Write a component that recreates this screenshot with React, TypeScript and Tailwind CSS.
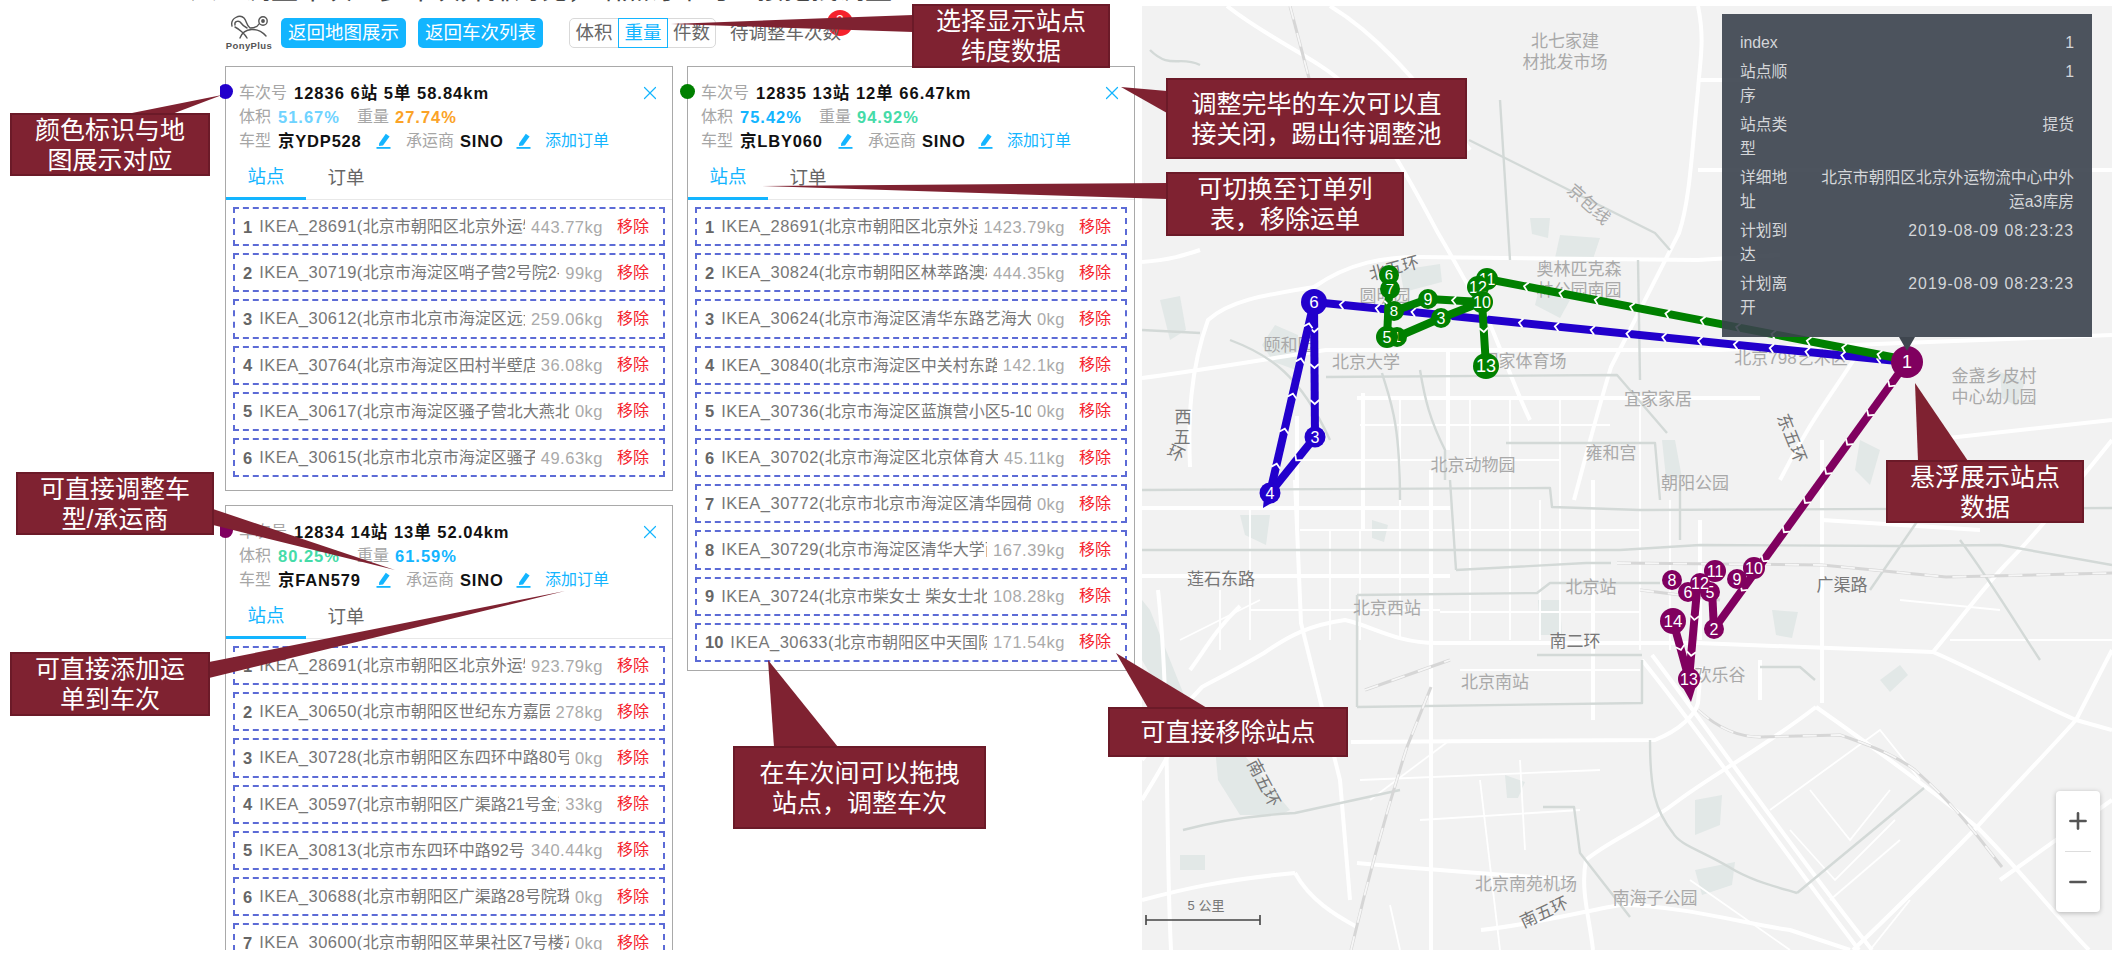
import React from 'react';
import { Minus, Plus, X } from 'lucide-react';

type Stop = { address: string; weight: string };

type Trip = {
  color: string;
  no: string;
  volume: string;
  volumeColor: string;
  weight: string;
  weightColor: string;
  plate: string;
  stops: Stop[];
  height: string;
};

const trips: Record<string, Trip> = {
  a: {
    color: 'bg-[#2200cc]',
    no: '12836 6站 5单 58.84km',
    volume: '51.67%',
    volumeColor: 'text-[#6fd3ff]',
    weight: '27.74%',
    weightColor: 'text-[#fba327]',
    plate: '京YDP528',
    height: 'h-[425px]',
    stops: [
      { address: 'IKEA_28691(北京市朝阳区北京外运物流中心中外运a3库房)', weight: '443.77kg' },
      { address: 'IKEA_30719(北京市海淀区哨子营2号院2-1单元)', weight: '99kg' },
      { address: 'IKEA_30612(北京市北京市海淀区远大路1号)', weight: '259.06kg' },
      { address: 'IKEA_30764(北京市海淀区田村半壁店6号楼)', weight: '36.08kg' },
      { address: 'IKEA_30617(北京市海淀区骚子营北大燕北园小区)', weight: '0kg' },
      { address: 'IKEA_30615(北京市北京市海淀区骚子营北大)', weight: '49.63kg' },
    ],
  },
  b: {
    color: 'bg-[#008000]',
    no: '12835 13站 12单 66.47km',
    volume: '75.42%',
    volumeColor: 'text-[#13b5ff]',
    weight: '94.92%',
    weightColor: 'text-[#45dba8]',
    plate: '京LBY060',
    height: '',
    stops: [
      { address: 'IKEA_28691(北京市朝阳区北京外运物流中心中外运a3库房)', weight: '1423.79kg' },
      { address: 'IKEA_30824(北京市朝阳区林萃路澳林春天小区)', weight: '444.35kg' },
      { address: 'IKEA_30624(北京市海淀区清华东路艺海大厦小区)', weight: '0kg' },
      { address: 'IKEA_30840(北京市海淀区中关村东路-1号院)', weight: '142.1kg' },
      { address: 'IKEA_30736(北京市海淀区蓝旗营小区5-10楼)', weight: '0kg' },
      { address: 'IKEA_30702(北京市海淀区北京体育大学校内)', weight: '45.11kg' },
      { address: 'IKEA_30772(北京市北京市海淀区清华园荷清苑小区)', weight: '0kg' },
      { address: 'IKEA_30729(北京市海淀区清华大学西门内)', weight: '167.39kg' },
      { address: 'IKEA_30724(北京市柴女士 柴女士北京市海淀区)', weight: '108.28kg' },
      { address: 'IKEA_30633(北京市朝阳区中天国际公寓小区)', weight: '171.54kg' },
    ],
  },
  c: {
    color: 'bg-[#80005f]',
    no: '12834 14站 13单 52.04km',
    volume: '80.25%',
    volumeColor: 'text-[#45dba8]',
    weight: '61.59%',
    weightColor: 'text-[#13b5ff]',
    plate: '京FAN579',
    height: 'h-[470px]',
    stops: [
      { address: 'IKEA_28691(北京市朝阳区北京外运物流中心中外运a3库房)', weight: '923.79kg' },
      { address: 'IKEA_30650(北京市朝阳区世纪东方嘉园1号楼)', weight: '278kg' },
      { address: 'IKEA_30728(北京市朝阳区东四环中路80号;小区)', weight: '0kg' },
      { address: 'IKEA_30597(北京市朝阳区广渠路21号金海商富中心)', weight: '33kg' },
      { address: 'IKEA_30813(北京市东四环中路92号院小区)', weight: '340.44kg' },
      { address: 'IKEA_30688(北京市朝阳区广渠路28号院珠江帝景)', weight: '0kg' },
      { address: 'IKEA_30600(北京市朝阳区苹果社区7号楼7B单元)', weight: '0kg' },
    ],
  },
};

const PenIcon = () => (
  <svg width="15" height="16" viewBox="0 0 15 16" className="shrink-0">
    <path d="M3.2 10.2 L9.8 0.8 L13.6 3.4 L7 12.4 L3 13 Z" fill="#13b5ff" />
    <rect x="0.5" y="14" width="14" height="1.8" fill="#13b5ff" />
  </svg>
);

const TripCard = ({ trip }: { trip: Trip }) => (
  <div className={`relative w-[448px] border border-[#a9a9a9] bg-white pt-[14px] ${trip.height}`}>
    <span className={`absolute -left-[8px] top-[17px] h-[15px] w-[15px] rounded-full ${trip.color}`} />
    <div className="px-[13px]">
      <div className="flex h-[24px] items-center justify-between">
        <div className="flex items-center">
          <span className="w-[55px] text-[#a6a6a6]">车次号</span>
          <span className="text-[16.5px] font-bold tracking-[1px] text-[#111]">{trip.no}</span>
        </div>
        <X size={22} strokeWidth={1.3} className="-mr-[2px] text-[#13b5ff]" />
      </div>
      <div className="flex h-[24px] items-center">
        <span className="w-[39px] text-[#a6a6a6]">体积</span>
        <span className={`w-[79px] text-[16.5px] font-bold tracking-[1px] ${trip.volumeColor}`}>{trip.volume}</span>
        <span className="w-[38px] text-[#a6a6a6]">重量</span>
        <span className={`text-[16.5px] font-bold tracking-[1px] ${trip.weightColor}`}>{trip.weight}</span>
      </div>
      <div className="flex h-[24px] items-center">
        <span className="w-[39px] text-[#a6a6a6]">车型</span>
        <span className="w-[98px] text-[16.5px] font-bold tracking-[0.8px] text-[#111]">{trip.plate}</span>
        <PenIcon />
        <span className="ml-[15px] w-[54px] text-[#a6a6a6]">承运商</span>
        <span className="w-[56px] text-[16.5px] font-bold tracking-[0.8px] text-[#111]">SINO</span>
        <PenIcon />
        <span className="ml-[14px] text-[#13b5ff]">添加订单</span>
      </div>
    </div>
    <div className="flex h-[47px] border-b border-[#e8e8e8] text-[18.5px]">
      <div className="-mb-px flex w-[80px] items-center justify-center border-b-[3px] border-[#13b5ff] pt-[4px] text-[#13b5ff]">
        站点
      </div>
      <div className="flex w-[80px] items-center justify-center pt-[4px] text-[#666]">订单</div>
    </div>
    <div className="flex flex-col gap-[7px] px-[7px] pt-[7px] pb-[8px]">
      {trip.stops.map((stop, i) => (
        <div
          key={i}
          className="flex h-[39.2px] items-center border-[2px] border-dashed border-[#5c6bd6] pr-[14px] pl-[8px]"
        >
          <span className="mr-[7px] text-[16.5px] font-bold text-[#666]">{i + 1}</span>
          <span className="min-w-0 flex-1 overflow-hidden whitespace-nowrap text-[#777]">
            <span className="text-[16.5px] tracking-[0.5px]">{stop.address.slice(0, 11)}</span>
            {stop.address.slice(11)}
          </span>
          <span className="ml-[6px] shrink-0 text-[16.5px] tracking-[0.5px] text-[#aaa]">{stop.weight}</span>
          <span className="ml-[14px] shrink-0 text-[#f5222d]">移除</span>
        </div>
      ))}
    </div>
  </div>
);

const Logo = () => (
  <div className="flex w-[40px] flex-col items-center">
    <svg width="37" height="24" viewBox="0 0 37 24" fill="none" stroke="#555" strokeWidth="1.4" strokeLinecap="round">
      <path d="M1 11 C-1 3 9 -1 13 3 C16 6 15 10 19 13 C24 13 27 11 28 9" />
      <path d="M4 10 C3 6 8 5 10 8 C12 11 14 12 16 13" />
      <path d="M4 12 C8 14 14 19 16 23" />
      <path d="M9 23 C13 12 27 12 35 21" />
      <circle cx="32" cy="6" r="4.2" />
      <circle cx="32" cy="6" r="1.2" fill="#555" />
    </svg>
    <span className="mt-[1px] text-[9.5px] leading-[12px] font-bold tracking-[0.4px] whitespace-nowrap text-[#555]">
      PonyPlus
    </span>
  </div>
);

const whiteRoads = [
  'M1227 6 C1270 40 1320 60 1345 85 C1390 140 1420 200 1438 233 C1460 270 1475 300 1487 317 C1505 360 1520 400 1530 420',
  'M1330 6 C1370 30 1410 70 1470 150',
  'M1698 6 C1705 40 1700 60 1698 90 C1692 150 1690 200 1679 233 C1650 290 1625 340 1611 367 C1595 420 1585 460 1574 500',
  'M1698 80 L1760 80',
  'M1698 170 L2112 170',
  'M1190 467 C1188 420 1190 370 1208 320 C1230 300 1265 295 1314 287 C1350 262 1385 257 1419 257 L1698 260 L1780 255',
  'M1142 378 C1190 372 1260 360 1326 350 L1720 350 L2112 335',
  'M1142 262 C1170 260 1185 255 1200 250',
  'M1357 398 L1611 398 L1760 398',
  'M1780 480 C1810 420 1835 390 1860 350',
  'M1448 350 L1448 450',
  'M1363 393 L1363 530',
  'M1297 416 L1297 530',
  'M1295 480 L1301 623 C1315 680 1330 740 1340 780 L1350 900',
  'M1431 470 L1431 950',
  'M1593 480 L1593 720',
  'M1822 440 L1822 703',
  'M1142 508 L1450 508',
  'M1142 576 L1450 576',
  'M2112 730 L2076 720 C2030 700 1975 670 1933 652 L1698 643 L1437 643 C1395 643 1370 625 1345 620 C1310 625 1290 635 1264 653 C1235 670 1215 680 1202 687 C1180 710 1160 735 1142 760',
  'M2076 720 C2040 760 2010 790 1977 827 C1935 870 1890 915 1853 950',
  'M1816 707 C1870 745 1925 785 1977 827 C2020 870 2055 915 2089 950',
  'M2076 720 L2112 650',
  'M1642 660 C1710 745 1790 860 1859 950',
  'M1652 655 C1720 745 1800 860 1872 950',
  'M1816 707 C1760 750 1720 770 1679 800 C1640 830 1610 840 1586 860 C1580 890 1590 920 1593 950',
  'M1351 742 L1655 740 C1680 730 1695 715 1698 703 L1701 667',
  'M1357 863 C1430 870 1510 875 1574 880',
  'M1158 590 C1170 700 1165 830 1171 950',
  'M1295 873 C1310 900 1335 915 1357 927',
  'M1481 930 C1530 925 1580 912 1620 905 C1680 905 1750 925 1790 930 L1850 950',
  'M1142 800 C1160 770 1180 740 1190 700',
  'M1142 900 C1180 890 1220 880 1295 873',
  'M1933 652 C1960 620 1985 585 2010 560 C2040 530 2080 480 2112 440',
  'M1822 520 L1980 530',
  'M1240 606 C1215 630 1205 650 1190 670',
  'M2000 880 L2112 800',
  'M1930 440 L2112 420',
  'M1700 520 L1700 640',
  'M1760 660 L1760 700',
];

const thinRoads = [
  'M1470 400 L1470 640',
  'M1510 400 L1510 640',
  'M1540 500 L1540 640',
  'M1640 400 L1640 650',
  'M1670 500 L1670 650',
  'M1360 530 L1360 640',
  'M1330 530 L1330 640',
  'M1250 510 L1250 640',
  'M1220 590 L1220 650',
  'M1400 400 L1400 640',
  'M1560 400 L1560 640',
  'M1250 610 L1440 610',
  'M1440 612 L1640 612',
  'M1300 530 L1640 530',
  'M1360 425 L1610 425',
  'M1300 460 L1560 460',
  'M1460 670 L1640 670',
  'M1480 780 L1500 950',
  'M1520 760 L1525 850',
  'M1770 810 L1880 730 L1920 780',
  'M1810 790 L1850 840 L1890 790',
  'M1790 830 L1835 880 L1895 820',
  'M1830 900 L1900 840',
  'M1870 950 L1910 900',
  'M1690 880 L1790 950',
  'M1370 800 L1450 740',
  'M1390 905 L1400 950',
  'M1360 780 L1600 770',
  'M1420 820 L1580 810',
  'M1900 600 L2000 610',
  'M1950 640 L2112 640',
  'M1180 640 L1260 600',
];

const grayRoads = [
  'M1142 550 L1620 550 L1700 545 L1900 546 L2000 545 L2112 565',
  'M1142 490 L1550 488 L1552 507 L1640 510 L2112 508',
  'M1456 570 L1586 563 L1611 563',
  'M1357 595 L1537 593 L1550 583 L1660 583',
  'M1357 707 L1642 703 L1642 660',
  'M1537 655 L1642 655',
  'M1760 667 L1800 667 L1815 680',
  'M1543 807 L1574 807 L1580 853 L1630 917',
  'M1183 830 C1220 820 1260 815 1295 813 L1400 790',
  'M1797 893 L1924 788',
  'M1797 893 C1770 885 1750 880 1729 867 C1700 850 1680 845 1673 833 C1655 810 1650 790 1650 740',
  'M1469 140 L1655 233 L1670 250',
  'M1326 377 L1617 375 L1667 433',
  'M1382 373 C1390 400 1400 420 1400 500',
  'M1420 370 C1425 400 1430 420 1445 450 L1445 480',
  'M1506 443 L1655 443 L1660 500',
  'M1230 340 C1270 355 1300 375 1330 440',
  'M1142 330 L1200 333',
  'M1500 100 L1510 260',
  'M1870 590 L1925 510',
  'M1680 540 L1680 480',
  'M1638 260 L1640 380',
  'M1357 595 L1357 707',
  'M1456 570 L1450 480',
  'M1960 540 C1990 580 2020 630 2040 660',
  'M1150 50 C1170 70 1180 55 1200 65',
];

const rails = [
  'M1617 563 L1822 565 L1946 577 L2112 573',
  'M1698 710 C1720 730 1740 737 1760 737 L1840 735 C1870 745 1895 755 1915 770 C1960 810 1980 840 2002 867',
  'M1351 950 C1370 870 1390 800 1407 747 L1431 687',
  'M1640 590 L1720 600',
  'M1290 6 L1320 120',
  'M1365 690 L1450 660',
];

const areas = [
  'M1275 325 L1298 335 L1296 370 L1274 362 L1262 345 Z',
  'M1215 748 L1240 750 L1290 810 L1280 815 L1240 815 L1218 780 Z',
  'M1160 300 L1180 296 L1186 330 L1170 340 Z',
  'M1560 235 L1600 238 L1592 262 L1555 258 Z',
  'M1400 270 L1440 264 L1442 282 L1404 292 Z',
  'M1240 515 L1270 515 L1266 545 L1245 535 Z',
  'M1372 520 L1388 525 L1384 542 L1372 538 Z',
  'M1538 600 L1560 600 L1562 635 L1540 635 Z',
  'M1772 610 L1798 612 L1792 638 L1776 635 Z',
  'M1880 680 L1900 665 L1908 675 L1890 692 Z',
  'M1695 800 L1722 795 L1720 825 L1695 835 Z',
  'M1695 870 L1735 862 L1732 885 L1702 895 Z',
  'M1505 775 L1525 782 L1518 798 L1507 798 Z',
  'M1662 440 L1675 440 L1682 478 L1666 478 Z',
  'M1530 218 L1550 218 L1548 238 L1532 234 Z',
  'M1142 600 L1150 610 L1186 700 L1172 712 L1142 660 Z',
  'M2000 372 L2025 382 L2016 406 L2002 398 Z',
  'M1180 855 L1205 855 L1205 870 L1180 870 Z',
  'M1540 285 L1570 300 L1560 318 L1535 305 Z',
  'M1860 440 L1880 450 L1870 485 L1855 470 Z',
];

type Label = { text: string; x: number; y: number; rotate?: number; dark?: boolean; size?: number };

const labels: Label[] = [
  { text: '北七家建', x: 1565, y: 41 },
  { text: '材批发市场', x: 1565, y: 62 },
  { text: '京包线', x: 1589, y: 204, rotate: 42 },
  { text: '奥林匹克森', x: 1579, y: 269 },
  { text: '林公园南园', x: 1579, y: 290 },
  { text: '北五环', x: 1394, y: 268, rotate: -15, dark: true },
  { text: '圆明园', x: 1385, y: 296 },
  { text: '颐和园', x: 1289, y: 345 },
  { text: '北京大学', x: 1366, y: 362 },
  { text: '国家体育场', x: 1524, y: 361 },
  { text: '北京798艺术区', x: 1791, y: 358 },
  { text: '金盏乡皮村', x: 1994, y: 376 },
  { text: '中心幼儿园', x: 1994, y: 397 },
  { text: '宜家家居', x: 1658, y: 399 },
  { text: '东五环', x: 1792, y: 438, rotate: 68, dark: true },
  { text: '西', x: 1183, y: 417, dark: true },
  { text: '五', x: 1182, y: 437, dark: true },
  { text: '环', x: 1176, y: 453, rotate: 25, dark: true },
  { text: '雍和宫', x: 1611, y: 453 },
  { text: '北京动物园', x: 1473, y: 465 },
  { text: '朝阳公园', x: 1695, y: 483 },
  { text: '莲石东路', x: 1221, y: 579, dark: true },
  { text: '北京站', x: 1591, y: 587 },
  { text: '北京西站', x: 1387, y: 608 },
  { text: '广渠路', x: 1842, y: 585, dark: true },
  { text: '南二环', x: 1575, y: 641, dark: true },
  { text: '欢乐谷', x: 1720, y: 675 },
  { text: '北京南站', x: 1495, y: 682 },
  { text: '南五环', x: 1264, y: 783, rotate: 62, dark: true },
  { text: '北京南苑机场', x: 1526, y: 884 },
  { text: '南五环', x: 1544, y: 912, rotate: -25, dark: true },
  { text: '南海子公园', x: 1655, y: 898 },
  { text: '5 公里', x: 1206, y: 905, dark: true, size: 13 },
];

type Pt = [number, number];

const chevrons = (from: Pt, to: Pt, step = 36) => {
  const dx = to[0] - from[0];
  const dy = to[1] - from[1];
  const len = Math.hypot(dx, dy);
  const ux = dx / len;
  const uy = dy / len;
  const out: string[] = [];
  for (let d = 30; d < len - 18; d += step) {
    const cx = from[0] + ux * d;
    const cy = from[1] + uy * d;
    out.push(
      `M${cx - ux * 4 - uy * 4.5} ${cy - uy * 4 + ux * 4.5} L${cx} ${cy} L${cx - ux * 4 + uy * 4.5} ${cy - uy * 4 - ux * 4.5}`,
    );
  }
  return out.join(' ');
};

const Route = ({ color, width = 8, segments }: { color: string; width?: number; segments: Pt[][] }) => (
  <g>
    {segments.map((s, i) => (
      <g key={i}>
        <line x1={s[0][0]} y1={s[0][1]} x2={s[1][0]} y2={s[1][1]} stroke={color} strokeWidth={width} />
        <path d={chevrons(s[0], s[1])} fill="none" stroke="#fff" strokeWidth="1.8" />
      </g>
    ))}
  </g>
);

const Pin = ({ x, y, n, r = 10, color, size = 15, tail }: { x: number; y: number; n: number; r?: number; color: string; size?: number; tail?: Pt }) => (
  <g>
    {tail && (
      <polygon points={`${x - r * 0.6},${y + r * 0.7} ${x + r * 0.6},${y + r * 0.7} ${tail[0]},${tail[1]}`} fill={color} />
    )}
    <circle cx={x} cy={y} r={r} fill={color} />
    <text x={x} y={y + size * 0.36} textAnchor="middle" fontSize={size} fill="#fff">
      {n}
    </text>
  </g>
);

const MapDrawing = () => (
  <svg viewBox="1142 6 970 944" className="absolute inset-0 h-full w-full font-['Liberation_Sans','Noto_Sans_CJK_SC',sans-serif]">
    <rect x="1142" y="6" width="970" height="944" fill="#f2f2f2" />
    {areas.map((d) => (
      <path key={d} d={d} fill="#e2e8e7" />
    ))}
    <g fill="none" stroke="#fff" strokeWidth="1.8">
      {thinRoads.map((d) => (
        <path key={d} d={d} />
      ))}
    </g>
    <g fill="none" stroke="#fff" strokeWidth="4" strokeLinejoin="round">
      {whiteRoads.map((d) => (
        <path key={d} d={d} />
      ))}
    </g>
    <g fill="none" stroke="#d3d9d7" strokeWidth="2.4" strokeLinejoin="round">
      {grayRoads.map((d) => (
        <path key={d} d={d} />
      ))}
    </g>
    <g fill="none">
      {rails.map((d) => (
        <g key={d}>
          <path d={d} stroke="#d6d6d6" strokeWidth="3" />
          <path d={d} stroke="#f6f6f6" strokeWidth="1.8" strokeDasharray="14 14" />
        </g>
      ))}
    </g>
    {labels.map((l) => (
      <text
        key={l.text + l.x}
        x={l.x}
        y={l.y + (l.size ?? 17) * 0.36}
        textAnchor="middle"
        fontSize={l.size ?? 17}
        fill={l.dark ? '#777' : '#a9a9a9'}
        transform={l.rotate ? `rotate(${l.rotate} ${l.x} ${l.y})` : undefined}
      >
        {l.text}
      </text>
    ))}
    <path d="M1146 915 V925 M1146 920 H1260 M1260 915 V925" stroke="#444" strokeWidth="1.6" fill="none" />

    <Route
      color="#80005f"
      segments={[
        [[1907, 362], [1714, 629]],
        [[1712, 590], [1714, 629]],
        [[1697, 590], [1689, 679]],
        [[1673, 621], [1689, 679]],
      ]}
    />
    <Route
      color="#2200cc"
      segments={[
        [[1907, 362], [1314, 302]],
        [[1314, 302], [1315, 437]],
        [[1315, 437], [1270, 493]],
        [[1270, 493], [1314, 302]],
      ]}
    />
    <Route
      color="#008000"
      segments={[
        [[1907, 360], [1487, 279]],
        [[1482, 302], [1428, 299]],
        [[1482, 302], [1441, 318]],
        [[1441, 318], [1397, 337]],
        [[1428, 299], [1394, 311]],
        [[1482, 302], [1486, 366]],
        [[1390, 275], [1387, 337]],
      ]}
    />

    <Pin x={1389} y={275} n={6} color="#008000" />
    <Pin x={1390} y={289} n={7} color="#008000" />
    <Pin x={1397} y={337} n={1} color="#008000" />
    <Pin x={1387} y={337} n={5} color="#008000" r={11} size={16} />
    <Pin x={1394} y={311} n={8} color="#008000" />
    <Pin x={1428} y={299} n={9} color="#008000" size={16} />
    <Pin x={1441} y={318} n={3} color="#008000" size={16} />
    <Pin x={1487} y={279} n={11} color="#008000" r={11} size={16} />
    <Pin x={1478} y={287} n={12} color="#008000" r={11} size={16} />
    <Pin x={1482} y={302} n={10} color="#008000" r={11} size={16} />
    <Pin x={1486} y={366} n={13} color="#008000" r={13} size={18} />

    <Pin x={1314} y={302} n={6} color="#2200cc" r={13} size={17} />
    <Pin x={1315} y={437} n={3} color="#2200cc" r={10.5} size={16} />
    <Pin x={1270} y={493} n={4} color="#2200cc" r={10.5} size={16} tail={[1263, 508]} />

    <Pin x={1714} y={629} n={2} color="#80005f" size={16} />
    <Pin x={1672} y={580} n={8} color="#80005f" size={16} />
    <Pin x={1737} y={579} n={9} color="#80005f" size={16} />
    <Pin x={1715} y={571} n={11} color="#80005f" r={11} size={16} />
    <Pin x={1754} y={568} n={10} color="#80005f" r={11} size={16} />
    <Pin x={1710} y={592} n={5} color="#80005f" size={16} />
    <Pin x={1688} y={592} n={6} color="#80005f" size={16} />
    <Pin x={1700} y={583} n={12} color="#80005f" size={16} />
    <Pin x={1673} y={621} n={14} color="#80005f" r={13} size={17} />
    <Pin x={1689} y={679} n={13} color="#80005f" r={11} size={16} tail={[1691, 702]} />
    <Pin x={1907} y={362} n={1} color="#80005f" r={16} size={18} />
  </svg>
);

const tooltipRows: [string, string[]][] = [
  ['index', ['1']],
  ['站点顺序', ['1']],
  ['站点类型', ['提货']],
  ['详细地址', ['北京市朝阳区北京外运物流中心中外', '运a3库房']],
  ['计划到达', ['2019-08-09 08:23:23']],
  ['计划离开', ['2019-08-09 08:23:23']],
];

const Tooltip = () => (
  <div className="absolute top-[8px] left-[580px] w-[370px] bg-[#3a414c]/90 px-[18px] pt-[17px] pb-[17px] text-[15.8px] leading-[24px] text-[#d4d6d9]">
    <div className="flex flex-col gap-[5px]">
      {tooltipRows.map(([label, value]) => (
        <div key={label} className="flex">
          <div className="w-[50px] shrink-0 break-all">{label}</div>
          <div className={`flex-1 text-right ${label.startsWith('计划') ? 'tracking-[1px]' : ''}`}>
            {value.map((line) => (
              <div key={line}>{line}</div>
            ))}
          </div>
        </div>
      ))}
    </div>
    <span className="absolute top-full left-[177px] h-0 w-0 border-x-[8px] border-t-[14px] border-x-transparent border-t-[#3f464f]" />
  </div>
);

type Callout = { x: number; y: number; w: number; h: number; lines: string[]; tip: string };

const callouts: Callout[] = [
  { x: 10, y: 113, w: 200, h: 63, lines: ['颜色标识与地', '图展示对应'], tip: '222,95 127,114 172,114' },
  { x: 912, y: 4, w: 198, h: 64, lines: ['选择显示站点', '纬度数据'], tip: '671,24 913,15 913,32' },
  { x: 1166, y: 78, w: 301, h: 81, lines: ['调整完毕的车次可以直', '接关闭，踢出待调整池'], tip: '1121,87 1167,91 1167,113' },
  { x: 1166, y: 172, w: 238, h: 64, lines: ['可切换至订单列', '表，移除运单'], tip: '762,186 1167,183 1167,199' },
  { x: 16, y: 472, w: 198, h: 63, lines: ['可直接调整车', '型/承运商'], tip: '395,570 213,509 213,525' },
  { x: 10, y: 652, w: 200, h: 64, lines: ['可直接添加运', '单到车次'], tip: '565,591 209,662 209,678' },
  { x: 733, y: 746, w: 253, h: 83, lines: ['在车次间可以拖拽', '站点，调整车次'], tip: '768,660 774,747 838,747' },
  { x: 1108, y: 707, w: 240, h: 50, lines: ['可直接移除站点'], tip: '1116,653 1148,708 1207,708' },
  { x: 1886, y: 460, w: 198, h: 63, lines: ['悬浮展示站点', '数据'], tip: '1915,383 1918,461 1968,461' },
];

const Callouts = () => (
  <>
    <svg viewBox="0 0 2112 962" className="pointer-events-none absolute inset-0 h-[962px] w-[2112px]">
      {callouts.map((c) => (
        <polygon key={c.tip} points={c.tip} fill="#7f2231" />
      ))}
    </svg>
    {callouts.map((c) => (
      <div
        key={c.tip}
        className="absolute flex flex-col items-center justify-center border-2 border-[#6b1a28] bg-[#7f2231] text-[25px] leading-[30px] whitespace-nowrap text-white"
        style={{ left: c.x, top: c.y, width: c.w, height: c.h }}
      >
        {c.lines.map((line) => (
          <div key={line}>{line}</div>
        ))}
      </div>
    ))}
  </>
);

const App = () => {
  return (
    <div className="relative h-[962px] w-[2112px] overflow-hidden bg-white font-['Liberation_Sans','Noto_Sans_CJK_SC',sans-serif] text-[16px] leading-[24px]">
      <div className="flex h-[950px] overflow-hidden">
        <div className="w-[1142px] shrink-0">
          <div className="ml-[190px] h-[4px] overflow-hidden">
            <h1 className="-mt-[27px] text-[27px] leading-[34px] whitespace-nowrap text-[#444]">
              人工调整车次：多车次并排对比，站点订单可直接拖拽调整
            </h1>
          </div>
          <div className="ml-[220px] overflow-hidden pl-[5px]">
            <div className="mt-[14px] flex h-[30px] items-center text-[18.5px]">
              <div className="mr-[12px] ml-[4px]">
                <Logo />
              </div>
              <button className="mr-[12px] h-[30px] w-[125px] rounded-[5px] bg-[#13b5ff] text-white">返回地图展示</button>
              <button className="mr-[26px] h-[30px] w-[125px] rounded-[5px] bg-[#13b5ff] text-white">返回车次列表</button>
              <div className="flex h-[30px] w-[147px] rounded-[5px] border border-[#d9d9d9] text-[#666]">
                <span className="flex w-[48px] items-center justify-center">体积</span>
                <span className="-my-px flex w-[50px] items-center justify-center border border-[#13b5ff] text-[#13b5ff]">
                  重量
                </span>
                <span className="flex flex-1 items-center justify-center">件数</span>
              </div>
              <div className="relative ml-[14px] text-[#666]">
                <span className="absolute top-[-11px] left-[97px] flex h-[26px] w-[26px] justify-center rounded-full bg-[#f5222d] text-[14px] leading-[20px] text-white">
                  3
                </span>
                <span className="relative">待调整车次数</span>
              </div>
            </div>
            <div className="mt-[18px] flex gap-[14px]">
              <div className="flex w-[448px] flex-col gap-[14px]">
                <TripCard trip={trips.a} />
                <TripCard trip={trips.c} />
              </div>
              <div className="w-[448px]">
                <TripCard trip={trips.b} />
              </div>
            </div>
          </div>
        </div>
        <div className="relative mt-[6px] flex-1 overflow-hidden">
          <MapDrawing />
          <Tooltip />
          <div className="absolute top-[785px] left-[914px] flex h-[121px] w-[44px] flex-col items-center justify-between rounded-[4px] bg-white py-[17px] text-[#555] shadow-[0_1px_5px_rgba(0,0,0,0.25)]">
            <Plus size={26} strokeWidth={2.4} />
            <span className="h-px w-[26px] bg-[#ddd]" />
            <Minus size={26} strokeWidth={2.4} />
          </div>
        </div>
      </div>
      <Callouts />
    </div>
  );
};

export default App;
